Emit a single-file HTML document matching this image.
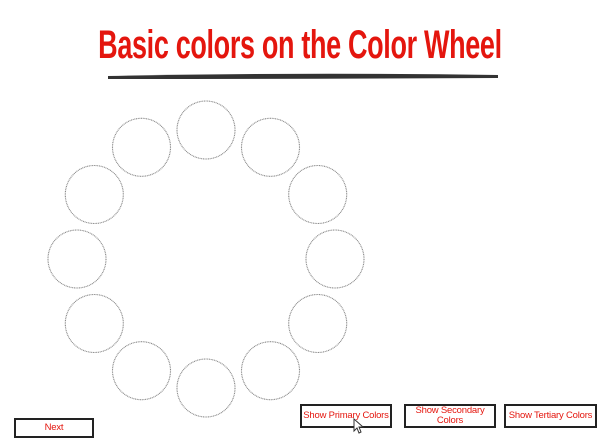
<!DOCTYPE html>
<html><head><meta charset="utf-8"><style>
html,body{margin:0;padding:0;width:600px;height:445px;background:#fff;overflow:hidden;position:relative;font-family:"Liberation Sans",sans-serif}
.title{position:absolute;left:0;width:600px;top:22px;text-align:center;color:#e4160e;font-family:"Liberation Sans",sans-serif;font-weight:bold;font-size:40px;line-height:46px;letter-spacing:-0.5px}
.btn{position:absolute;box-sizing:border-box;border:2px solid #222;background:#fff;color:#e4160e;font-size:9.5px;text-align:center;display:flex;align-items:center;justify-content:center;line-height:10px;letter-spacing:-0.2px}
.nw{white-space:nowrap}
</style></head><body>
<div class="title"><span style="display:inline-block;transform:scaleX(0.675)">Basic colors on the Color Wheel</span></div>
<svg style="position:absolute;left:0;top:0" width="600" height="445">
<path d="M108 76 Q300 72 498 75 L498 78 Q300 79 108 79 Z" fill="#333"/>
<g fill="none" stroke="#888" stroke-width="1.1" stroke-dasharray="1 0.7">
<circle cx="206" cy="130" r="29"/>
<circle cx="270.5" cy="147.3" r="29"/>
<circle cx="317.7" cy="194.5" r="29"/>
<circle cx="335" cy="259" r="29"/>
<circle cx="317.7" cy="323.5" r="29"/>
<circle cx="270.5" cy="370.7" r="29"/>
<circle cx="206" cy="388" r="29"/>
<circle cx="141.5" cy="370.7" r="29"/>
<circle cx="94.3" cy="323.5" r="29"/>
<circle cx="77" cy="259" r="29"/>
<circle cx="94.3" cy="194.5" r="29"/>
<circle cx="141.5" cy="147.3" r="29"/>
</g>
</svg>
<div class="btn" style="left:14px;top:418px;width:80px;height:20px">Next</div>
<div class="btn nw" style="left:300px;top:404px;width:92px;height:24px">Show Primary Colors</div>
<div class="btn" style="left:404px;top:404px;width:92px;height:24px">Show Secondary<br>Colors</div>
<div class="btn nw" style="left:504px;top:404px;width:93px;height:24px">Show Tertiary Colors</div>
<svg style="position:absolute;left:353px;top:418px" width="12" height="16"><path d="M1 1 L1 13 L4 10 L6 15 L8 14 L6 9 L10 9 Z" fill="#fff" stroke="#333" stroke-width="1"/></svg>
</body></html>
